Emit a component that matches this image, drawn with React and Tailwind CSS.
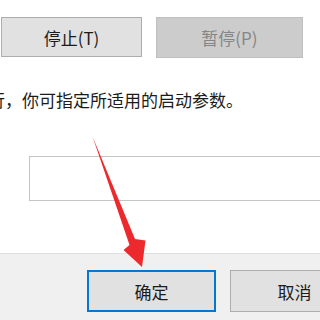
import React from "react";

function Btn({ children, className = "" }) {
  return (
    <div
      className={
        "flex items-center justify-center shrink-0 border text-[17px] leading-none " +
        className
      }
    >
      {children}
    </div>
  );
}

export default function App() {
  return (
    <div
      className="relative w-[320px] h-[320px] overflow-hidden bg-white text-[#1b1b1b]"
      style={{ fontFamily: '"Noto Sans CJK SC", "Noto Sans", sans-serif' }}
    >
      {/* top buttons */}
      <div className="flex pt-[17px] pl-[1px] gap-[14px] items-start">
        <Btn className="w-[141px] h-[40px] bg-[#e1e1e1] border-[#adadad]">
          停止(T)
        </Btn>
        <Btn className="w-[147px] h-[41px] bg-[#cccccc] border-[#bfbfbf] text-[#868686]">
          暂停(P)
        </Btn>
      </div>

      {/* description */}
      <div className="mt-[30px] ml-[-12px] whitespace-nowrap text-[17px] leading-[24px]">
        行，你可指定所适用的启动参数。
      </div>

      {/* input */}
      <div className="mt-[44px] ml-[29px] w-[320px] h-[45px] border border-[#c4c4c4] bg-white" />

      {/* footer */}
      <div className="mt-[52px] h-[80px] border-t border-[#dfdfdf] bg-[#f0f0f0] pt-[16px]">
        <div className="flex pl-[87px] gap-[14px]">
          <Btn className="w-[129px] h-[42px] bg-[#e1e1e1] border-2 border-[#0078d7]">
            确定
          </Btn>
          <Btn className="w-[129px] h-[42px] bg-[#e1e1e1] border-[#adadad]">
            取消
          </Btn>
        </div>
      </div>

      {/* red arrow annotation */}
      <svg
        className="absolute left-0 top-0 pointer-events-none"
        width="320"
        height="320"
        viewBox="0 0 320 320"
      >
        <polygon
          points="92.5,136.5 135,239 145.5,240.5 142,267 123.5,250 129.5,245"
          fill="#ec2a2d"
        />
      </svg>
    </div>
  );
}
